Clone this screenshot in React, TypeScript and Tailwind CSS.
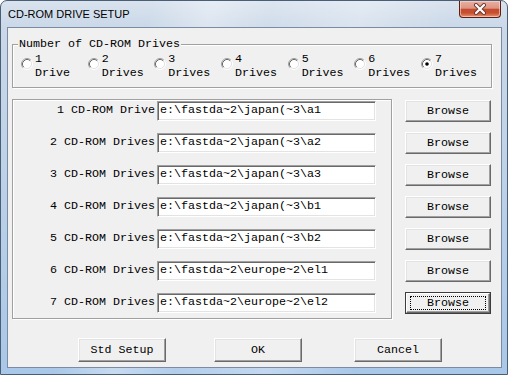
import React from "react";

function Radio({ checked }: { checked: boolean }) {
  return (
    <svg width="12" height="12" viewBox="0 0 12 12" className="shrink-0">
      <circle cx="6" cy="6" r="4.5" fill="#ffffff" />
      <path d="M2.11 9.89 A5.5 5.5 0 0 1 9.89 2.11" fill="none" stroke="#a0a0a0" strokeWidth="1" />
      <path d="M9.89 2.11 A5.5 5.5 0 0 1 2.11 9.89" fill="none" stroke="#ffffff" strokeWidth="1" />
      <path d="M2.82 9.18 A4.5 4.5 0 0 1 9.18 2.82" fill="none" stroke="#696969" strokeWidth="1" />
      <path d="M9.18 2.82 A4.5 4.5 0 0 1 2.82 9.18" fill="none" stroke="#e3e3e3" strokeWidth="1" />
      {checked && <circle cx="6" cy="6" r="1.8" fill="#000000" />}
    </svg>
  );
}

function Btn({ label, w, h, focused }: { label: string; w: string; h: string; focused?: boolean }) {
  if (focused) {
    return (
      <div className={`${w} ${h} border border-[#3c3c3c] bg-[#f0f0f0]`}>
        <div className="w-full h-full border border-t-white border-l-white border-r-[#696969] border-b-[#696969] shadow-[inset_-1px_-1px_0_#a0a0a0] flex items-center justify-center">
          <div className="w-[76px] h-[14px] border border-dotted border-[#000000] flex items-center justify-center font-['Liberation_Mono',monospace] text-[11.67px] leading-[13px] text-black">
            {label}
          </div>
        </div>
      </div>
    );
  }
  return (
    <div
      className={`${w} ${h} bg-[#f0f0f0] border border-t-white border-l-white border-r-[#696969] border-b-[#696969] shadow-[inset_-1px_-1px_0_#a0a0a0,inset_1px_1px_0_#e3e3e3] flex items-center justify-center font-['Liberation_Mono',monospace] text-[11.67px] leading-[13px] text-black`}
    >
      {label}
    </div>
  );
}

const drives = [
  { label: "1 CD-ROM Drive", path: "e:\\fastda~2\\japan(~3\\a1" },
  { label: "2 CD-ROM Drives", path: "e:\\fastda~2\\japan(~3\\a2" },
  { label: "3 CD-ROM Drives", path: "e:\\fastda~2\\japan(~3\\a3" },
  { label: "4 CD-ROM Drives", path: "e:\\fastda~2\\japan(~3\\b1" },
  { label: "5 CD-ROM Drives", path: "e:\\fastda~2\\japan(~3\\b2" },
  { label: "6 CD-ROM Drives", path: "e:\\fastda~2\\europe~2\\el1" },
  { label: "7 CD-ROM Drives", path: "e:\\fastda~2\\europe~2\\el2" },
];

const counts = ["1", "2", "3", "4", "5", "6", "7"];

export default function App() {
  return (
    <div className="w-[508px] h-[375px] overflow-hidden rounded-t-[7px] border border-[#4a5e76] bg-[linear-gradient(105deg,rgba(255,255,255,0)_0%,rgba(255,255,255,0)_25%,rgba(255,255,255,0.35)_35%,rgba(255,255,255,0.1)_45%,rgba(255,255,255,0.3)_60%,rgba(255,255,255,0)_75%),linear-gradient(180deg,#d9e3ee_0%,#cad8e8_7%,#bcd1e8_50%,#a9c7e8_100%)] flex flex-col">
      {/* title bar */}
      <div className="h-[26px] flex items-start justify-between shrink-0">
        <span className="pl-[7px] pt-[6px] font-['Liberation_Sans',Arial,sans-serif] text-[11px] leading-[14px] text-black">
          CD-ROM DRIVE SETUP
        </span>
        <div className="mr-[6px] w-[42px] h-[17px] rounded-b-[4px] border border-t-0 border-[#5a2014] bg-[linear-gradient(180deg,#eab0a2_0%,#dc9482_45%,#c64a30_52%,#c8502f_75%,#e49473_100%)] shadow-[inset_0_0_0_1px_rgba(255,220,210,0.6)] flex items-center justify-center">
          <svg width="14" height="12" viewBox="0 0 14 12">
            <path d="M3 2 L11 10 M11 2 L3 10" stroke="#6b3a30" strokeWidth="4" strokeLinecap="round" />
            <path d="M3 2 L11 10 M11 2 L3 10" stroke="#ffffff" strokeWidth="2.2" strokeLinecap="round" />
          </svg>
        </div>
      </div>

      {/* client area */}
      <div className="ml-[6px] w-[495px] h-[341px] border border-[#7b8ca2] bg-[#f0f0f0] flex flex-col font-['Liberation_Mono',monospace] text-[11.67px] leading-[13.5px] text-black">
        {/* group 1 */}
        <div className="relative ml-[4px] mt-[16px] w-[480px] h-[44px] border border-[#a0a0a0] shadow-[1px_1px_0_#ffffff,inset_1px_1px_0_#ffffff] shrink-0">
          <span className="absolute left-[5px] top-[-7px] px-[1px] bg-[#f0f0f0]">Number of CD-ROM Drives</span>
          <div className="flex pl-[8px] pt-[8px]">
            {counts.map((c, i) => (
              <div key={c} className="w-[66.67px] flex items-start shrink-0">
                <div className="mt-[5px]">
                  <Radio checked={i === 6} />
                </div>
                <div className="ml-[2px] flex flex-col">
                  <span>{c}</span>
                  <span>{i === 0 ? "Drive" : "Drives"}</span>
                </div>
              </div>
            ))}
          </div>
        </div>

        {/* group 2 + browse */}
        <div className="mt-[11px] flex items-start shrink-0">
          <div className="ml-[4px] w-[380px] h-[220px] border border-[#a0a0a0] shadow-[1px_1px_0_#ffffff,inset_1px_1px_0_#ffffff] flex flex-col gap-[10px]">
            {drives.map((d) => (
              <div key={d.label} className="h-[22px] flex items-center">
                <span className="w-[142px] text-right whitespace-nowrap">{d.label}</span>
                <div className="ml-[2px] w-[219px] h-[20px] bg-white border border-t-[#a0a0a0] border-l-[#a0a0a0] border-r-white border-b-white shadow-[inset_1px_1px_0_#696969,inset_-1px_-1px_0_#e3e3e3] pl-[2px] flex items-center whitespace-nowrap">
                  {d.path}
                </div>
              </div>
            ))}
          </div>
          <div className="ml-[13px] mt-[1px] flex flex-col gap-[10px]">
            {drives.map((d, i) => (
              <Btn key={d.label} label="Browse" w="w-[86px]" h="h-[22px]" focused={i === 6} />
            ))}
          </div>
        </div>

        {/* bottom buttons */}
        <div className="mt-[19px] ml-[70px] flex shrink-0">
          <Btn label="Std Setup" w="w-[88px]" h="h-[24px]" />
          <div className="ml-[48px]">
            <Btn label="OK" w="w-[88px]" h="h-[24px]" />
          </div>
          <div className="ml-[52px]">
            <Btn label="Cancel" w="w-[88px]" h="h-[24px]" />
          </div>
        </div>
      </div>
    </div>
  );
}
